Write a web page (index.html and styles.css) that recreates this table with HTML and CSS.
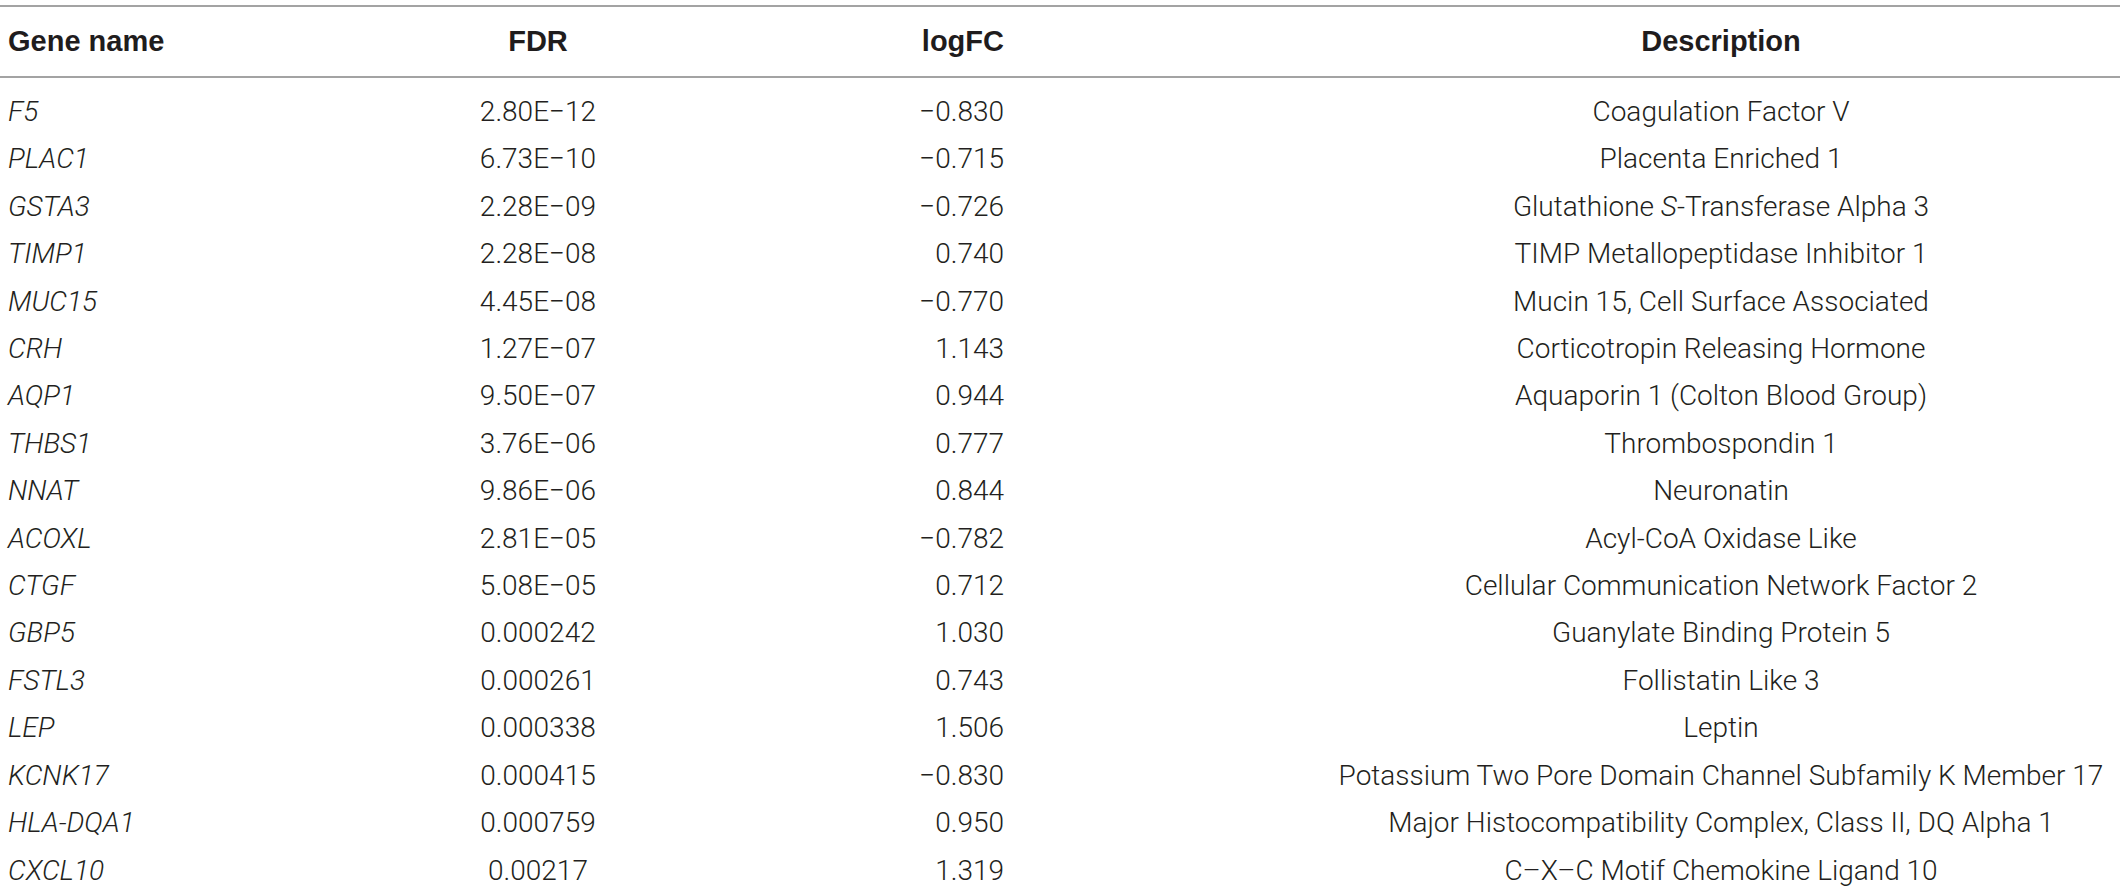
FILE: index.html
```html
<!DOCTYPE html>
<html lang="en">
<head>
<meta charset="utf-8">
<title>Differentially expressed genes</title>
<link rel="stylesheet" href="styles.css">
</head>
<body>
<table class="genes">
  <colgroup>
    <col class="w-gene">
    <col class="w-fdr">
    <col class="w-fc">
    <col class="w-desc">
  </colgroup>
  <thead>
    <tr>
      <th class="c-gene">Gene name</th>
      <th class="c-fdr">FDR</th>
      <th class="c-fc">logFC</th>
      <th class="c-desc">Description</th>
    </tr>
  </thead>
  <tbody>
    <tr class="first"><td class="c-gene">F5</td><td class="c-fdr">2.80E−12</td><td class="c-fc">−0.830</td><td class="c-desc">Coagulation Factor V</td></tr>
    <tr><td class="c-gene">PLAC1</td><td class="c-fdr">6.73E−10</td><td class="c-fc">−0.715</td><td class="c-desc">Placenta Enriched 1</td></tr>
    <tr><td class="c-gene">GSTA3</td><td class="c-fdr">2.28E−09</td><td class="c-fc">−0.726</td><td class="c-desc">Glutathione <i>S</i>-Transferase Alpha 3</td></tr>
    <tr><td class="c-gene">TIMP1</td><td class="c-fdr">2.28E−08</td><td class="c-fc">0.740</td><td class="c-desc">TIMP Metallopeptidase Inhibitor 1</td></tr>
    <tr><td class="c-gene">MUC15</td><td class="c-fdr">4.45E−08</td><td class="c-fc">−0.770</td><td class="c-desc">Mucin 15, Cell Surface Associated</td></tr>
    <tr><td class="c-gene">CRH</td><td class="c-fdr">1.27E−07</td><td class="c-fc">1.143</td><td class="c-desc">Corticotropin Releasing Hormone</td></tr>
    <tr><td class="c-gene">AQP1</td><td class="c-fdr">9.50E−07</td><td class="c-fc">0.944</td><td class="c-desc">Aquaporin 1 (Colton Blood Group)</td></tr>
    <tr><td class="c-gene">THBS1</td><td class="c-fdr">3.76E−06</td><td class="c-fc">0.777</td><td class="c-desc">Thrombospondin 1</td></tr>
    <tr><td class="c-gene">NNAT</td><td class="c-fdr">9.86E−06</td><td class="c-fc">0.844</td><td class="c-desc">Neuronatin</td></tr>
    <tr><td class="c-gene">ACOXL</td><td class="c-fdr">2.81E−05</td><td class="c-fc">−0.782</td><td class="c-desc">Acyl-CoA Oxidase Like</td></tr>
    <tr><td class="c-gene">CTGF</td><td class="c-fdr">5.08E−05</td><td class="c-fc">0.712</td><td class="c-desc">Cellular Communication Network Factor 2</td></tr>
    <tr><td class="c-gene">GBP5</td><td class="c-fdr">0.000242</td><td class="c-fc">1.030</td><td class="c-desc">Guanylate Binding Protein 5</td></tr>
    <tr><td class="c-gene">FSTL3</td><td class="c-fdr">0.000261</td><td class="c-fc">0.743</td><td class="c-desc">Follistatin Like 3</td></tr>
    <tr><td class="c-gene">LEP</td><td class="c-fdr">0.000338</td><td class="c-fc">1.506</td><td class="c-desc">Leptin</td></tr>
    <tr><td class="c-gene">KCNK17</td><td class="c-fdr">0.000415</td><td class="c-fc">−0.830</td><td class="c-desc">Potassium Two Pore Domain Channel Subfamily K Member 17</td></tr>
    <tr><td class="c-gene">HLA-DQA1</td><td class="c-fdr">0.000759</td><td class="c-fc">0.950</td><td class="c-desc">Major Histocompatibility Complex, Class II, DQ Alpha 1</td></tr>
    <tr><td class="c-gene">CXCL10</td><td class="c-fdr">0.00217</td><td class="c-fc">1.319</td><td class="c-desc">C–X–C Motif Chemokine Ligand 10</td></tr>
  </tbody>
</table>
</body>
</html>
```

FILE: styles.css
```css
html, body {
  margin: 0;
  padding: 0;
  background: #ffffff;
  overflow: hidden;
}

body {
  padding-top: 5px;
  color: #231f20;
}

.genes {
  width: 2120px;
  table-layout: fixed;
  border-collapse: collapse;
  border-spacing: 0;
}

.w-gene { width: 400px; }
.w-fdr { width: 276px; }
.w-fc { width: 328px; }
.w-desc { width: 1116px; }

.genes th,
.genes td {
  padding: 0;
  white-space: nowrap;
}

.genes thead tr {
  border-top: 2px solid #a3a3a3;
  border-bottom: 2px solid #a3a3a3;
}

.genes th {
  height: 69px;
  font-family: "Liberation Sans", Arial, sans-serif;
  font-weight: 700;
  font-size: 29px;
  line-height: 69px;
  vertical-align: middle;
  color: #1f1c1d;
}

.genes td {
  height: 47.4px;
  font-family: Roboto, "Liberation Sans", sans-serif;
  font-weight: 300;
  font-size: 28px;
  line-height: 47.4px;
  vertical-align: middle;
}

.genes tbody tr.first td {
  padding-top: 10px;
}

.c-gene {
  text-align: left;
  padding-left: 8px !important;
}

td.c-gene {
  font-style: italic;
}

.c-fdr {
  text-align: center;
}

.c-fc {
  text-align: right;
  padding-right: 0;
}

.c-desc {
  text-align: center;
  padding-left: 318px !important;
}
```
